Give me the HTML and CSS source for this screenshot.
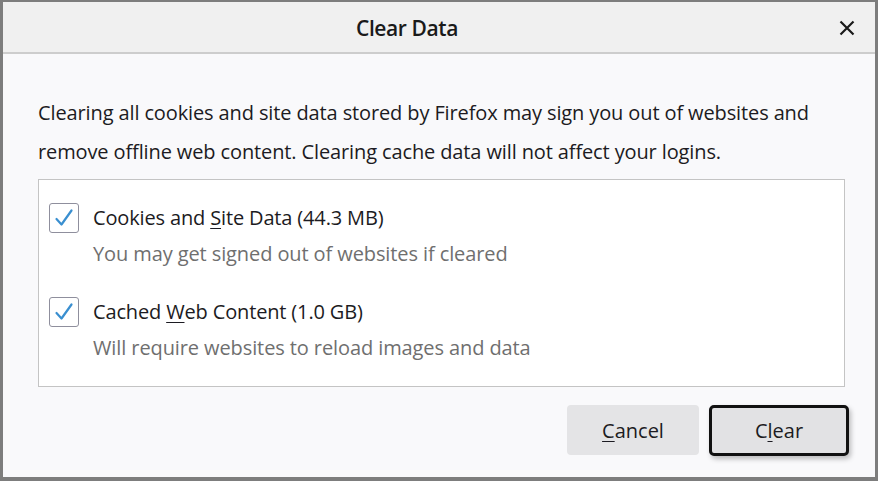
FILE: index.html
```html
<!DOCTYPE html>
<html>
<head>
<meta charset="utf-8">
<link rel="stylesheet" href="styles.css">
</head>
<body>
<div class="dialog">
  <div class="header">
    <div class="title">Clear Data</div>
    <div class="close">
      <svg width="16" height="16" viewBox="0 0 16 16"><path d="M1.5 1.5 L14.5 14.5 M14.5 1.5 L1.5 14.5" stroke="#1a1a1a" stroke-width="2.2" fill="none"/></svg>
    </div>
  </div>
  <div class="content">
    <p class="intro">Clearing all cookies and site data stored by Firefox may sign you out of websites and remove offline web content. Clearing cache data will not affect your logins.</p>
    <div class="options">
      <div class="option">
        <div class="check"><svg width="22" height="22" viewBox="0 0 22 22"><path d="M3.5 12 L8.5 17.5 L18.5 3.5" stroke="#3a8fd0" stroke-width="2.2" fill="none" stroke-linecap="round" stroke-linejoin="round"/></svg></div>
        <div class="texts">
          <div class="label">Cookies and <u>S</u>ite Data (44.3 MB)</div>
          <div class="desc">You may get signed out of websites if cleared</div>
        </div>
      </div>
      <div class="option">
        <div class="check"><svg width="22" height="22" viewBox="0 0 22 22"><path d="M3.5 12 L8.5 17.5 L18.5 3.5" stroke="#3a8fd0" stroke-width="2.2" fill="none" stroke-linecap="round" stroke-linejoin="round"/></svg></div>
        <div class="texts">
          <div class="label">Cached <u>W</u>eb Content (1.0 GB)</div>
          <div class="desc">Will require websites to reload images and data</div>
        </div>
      </div>
    </div>
    <div class="buttons">
      <button class="btn cancel"><u>C</u>ancel</button>
      <button class="btn primary">C<u>l</u>ear</button>
    </div>
  </div>
</div>
</body>
</html>
```

FILE: styles.css
```css
html, body {
  margin: 0;
  padding: 0;
}
body {
  width: 878px;
  height: 481px;
  font-family: "Open Sans", "Noto Sans", sans-serif;
  color: #1c1b22;
}
.dialog {
  box-sizing: border-box;
  width: 878px;
  height: 481px;
  border: 3px solid #7d7d7d;
  border-top-width: 2px;
  border-bottom-width: 4px;
  background: #f9f9fb;
  display: flex;
  flex-direction: column;
}
.header {
  height: 50px;
  background: #f0f0f0;
  border-bottom: 2px solid #cdcdcd;
  position: relative;
  display: flex;
  align-items: center;
  justify-content: center;
}
.title {
  font-size: 21px;
  font-weight: 600;
  letter-spacing: -0.4px;
  color: #1a1a1a;
  margin-right: 64px;
  margin-top: 2px;
}
.close {
  position: absolute;
  right: 20px;
  top: 18px;
  width: 16px;
  height: 16px;
  display: flex;
}
.content {
  flex: 1;
  padding: 39px 30px 0 35px;
  display: flex;
  flex-direction: column;
}
.intro {
  margin: 0;
  font-size: 20px;
  line-height: 39px;
  letter-spacing: -0.12px;
  color: #1c1b22;
}
.options {
  margin-top: 8px;
  background: #fff;
  border: 1px solid #c4c4c4;
  padding: 23px 0 0 10px;
  box-sizing: border-box;
  height: 208px;
  width: 807px;
  display: flex;
  flex-direction: column;
  gap: 22px;
}
.option {
  display: flex;
  align-items: flex-start;
}
.check {
  box-sizing: border-box;
  width: 30px;
  height: 30px;
  border: 1px solid #8f8f9d;
  border-radius: 3px;
  background: #fff;
  display: flex;
  align-items: center;
  justify-content: center;
  margin-right: 14px;
}
.texts {
  display: flex;
  flex-direction: column;
}
.label {
  font-size: 20px;
  line-height: 30px;
  letter-spacing: -0.15px;
  color: #1c1b22;
}
.desc {
  font-size: 20px;
  line-height: 42px;
  letter-spacing: -0.1px;
  color: #6f6f6f;
}
u {
  text-decoration-thickness: 1px;
  text-underline-offset: 3px;
}
.buttons {
  display: flex;
  justify-content: flex-end;
  gap: 10px;
  margin-top: 18px;
  margin-right: -4px;
}
.btn {
  font-family: inherit;
  font-size: 20px;
  color: #1c1b22;
  border: none;
  border-radius: 4px;
  height: 50px;
  padding: 0;
  box-sizing: border-box;
}
.cancel {
  width: 132px;
  background: #e4e4e6;
}
.primary {
  width: 140px;
  background: #e2e2e4;
  border: 3px solid #111;
  border-radius: 5px;
  box-shadow: 2px 3px 5px rgba(0,0,0,0.25);
  height: 51px;
}
```
